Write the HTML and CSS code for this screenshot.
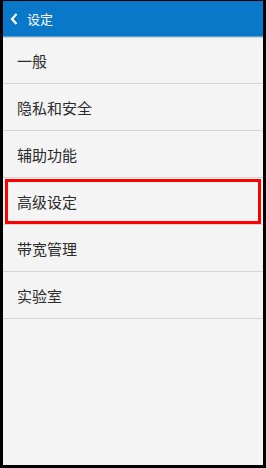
FILE: index.html
```html
<!DOCTYPE html>
<html lang="zh-CN">
  <head>
    <meta charset="UTF-8" />
    <meta name="viewport" content="width=device-width, initial-scale=1.0" />
    <title>设定</title>
    <link rel="stylesheet" href="styles.css">
  </head>
  <body>
    <div class="screen">
      <header class="topbar">
        <svg class="topbar__back" width="8" height="12" viewBox="0 0 8 12">
          <path d="M6.5 1 L2 6 L6.5 11" fill="none" stroke="#fff" stroke-width="2.2" />
        </svg>
        <span class="topbar__title">设定</span>
      </header>
      <ul class="menu">
        <li class="menu__item">一般</li>
        <li class="menu__item">隐私和安全</li>
        <li class="menu__item">辅助功能</li>
        <li class="menu__item menu__item--marked">高级设定</li>
        <li class="menu__item">带宽管理</li>
        <li class="menu__item">实验室</li>
      </ul>
    </div>
  </body>
</html>
```

FILE: styles.css
```css
* {
  margin: 0;
  padding: 0;
  box-sizing: border-box;
}

body {
  background: #000;
  font-family: "Noto Sans CJK SC", "Noto Sans", sans-serif;
}

.screen {
  margin: 1px 3px 3px;
  height: 464px;
  background: #f4f4f4;
  overflow: hidden;
}

.topbar {
  height: 36px;
  background: #0a78c8;
  display: flex;
  align-items: center;
  padding-left: 7px;
  gap: 9px;
  border-bottom: 1px solid #5b9fd3;
  box-shadow: 0 1px 1px rgba(0, 0, 0, 0.12);
}

.topbar__back {
  display: block;
}

.topbar__title {
  color: #fff;
  font-size: 13px;
  line-height: 1;
}

.menu {
  list-style: none;
}

.menu__item {
  position: relative;
  height: 47px;
  display: flex;
  align-items: center;
  padding-left: 14px;
  font-size: 15px;
  color: #2b2b2b;
  border-bottom: 1px solid #d3d5d8;
}

.menu__item--marked::after {
  content: "";
  position: absolute;
  inset: 1px 2px 0 2px;
  border: 3px solid #f00;
}
```
